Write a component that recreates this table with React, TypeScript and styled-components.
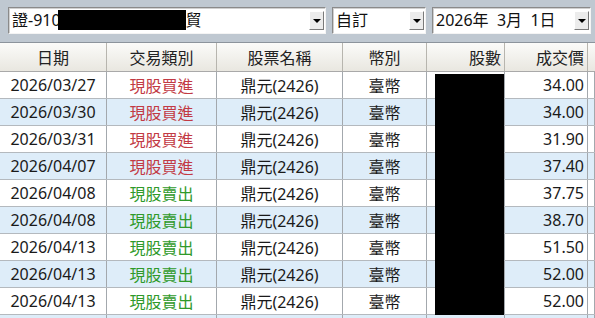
import React from "react";
import styled, { createGlobalStyle } from "styled-components";

const GlobalStyle = createGlobalStyle`
  html, body {
    margin: 0;
    padding: 0;
    background: #bfc8d1;
    overflow: hidden;
  }
`;

interface Trade {
  date: string;
  type: "buy" | "sell";
  name: string;
  currency: string;
  price: string;
}

const trades: Trade[] = [
  { date: "2026/03/27", type: "buy", name: "鼎元(2426)", currency: "臺幣", price: "34.00" },
  { date: "2026/03/30", type: "buy", name: "鼎元(2426)", currency: "臺幣", price: "34.00" },
  { date: "2026/03/31", type: "buy", name: "鼎元(2426)", currency: "臺幣", price: "31.90" },
  { date: "2026/04/07", type: "buy", name: "鼎元(2426)", currency: "臺幣", price: "37.40" },
  { date: "2026/04/08", type: "sell", name: "鼎元(2426)", currency: "臺幣", price: "37.75" },
  { date: "2026/04/08", type: "sell", name: "鼎元(2426)", currency: "臺幣", price: "38.70" },
  { date: "2026/04/13", type: "sell", name: "鼎元(2426)", currency: "臺幣", price: "51.50" },
  { date: "2026/04/13", type: "sell", name: "鼎元(2426)", currency: "臺幣", price: "52.00" },
  { date: "2026/04/13", type: "sell", name: "鼎元(2426)", currency: "臺幣", price: "52.00" },
  { date: "", type: "sell", name: "", currency: "", price: "" },
];

const COLS = "107px 110px 126px 84px 78px 83px 1fr";
const FONT = `"Noto Sans", "Noto Sans CJK TC", sans-serif`;

export default function App() {
  return (
    <Page>
      <GlobalStyle />
      <Toolbar>
        <Combo width={318}>
          <ComboText>證-910</ComboText>
          <Redact width={128} />
          <ComboText>貿</ComboText>
          <DropButton />
        </Combo>
        <Combo width={94}>
          <ComboText>自訂</ComboText>
          <DropButton />
        </Combo>
        <Combo width={159}>
          <ComboText>2026年&nbsp;&nbsp;3月&nbsp;&nbsp;1日</ComboText>
          <DropButton />
        </Combo>
      </Toolbar>
      <Grid>
        <HeaderRow>
          <HeadCell>日期</HeadCell>
          <HeadCell>交易類別</HeadCell>
          <HeadCell>股票名稱</HeadCell>
          <HeadCell>幣別</HeadCell>
          <HeadCell align="right">股數</HeadCell>
          <HeadCell align="right">成交價</HeadCell>
          <HeadCell />
        </HeaderRow>
        {trades.map((t, i) => (
          <Row key={i} striped={i % 2 === 1}>
            <Cell>{t.date}</Cell>
            <Cell tone={t.type}>{t.date ? (t.type === "buy" ? "現股買進" : "現股賣出") : ""}</Cell>
            <Cell>{t.name}</Cell>
            <Cell>{t.currency}</Cell>
            <Cell align="right" />
            <Cell align="right">{t.price}</Cell>
            <Cell />
          </Row>
        ))}
        <SharesRedaction />
      </Grid>
    </Page>
  );
}

const Page = styled.div`
  width: 595px;
  height: 318px;
  overflow: hidden;
  background: #bfc8d1;
  font-family: ${FONT};
`;

const Toolbar = styled.div`
  display: flex;
  align-items: center;
  gap: 6px;
  height: 43px;
  padding: 0 0 2px 8px;
  box-sizing: border-box;
  border-bottom: 1px solid #8c949c;
`;

const Combo = styled.div<{ width: number }>`
  position: relative;
  display: flex;
  align-items: center;
  width: ${(p) => p.width}px;
  height: 27px;
  box-sizing: border-box;
  background: #fff;
  border-top: 1px solid #8a8a8a;
  border-left: 1px solid #8a8a8a;
  border-right: 1px solid #f4f4f4;
  border-bottom: 1px solid #f4f4f4;
  box-shadow: inset 1px 1px 0 #d0d0d0;
  padding-left: 3px;
  font-size: 16px;
  color: #111;
`;

const ComboText = styled.span`
  white-space: nowrap;
  line-height: 1;
`;

const Redact = styled.span<{ width: number }>`
  display: inline-block;
  width: ${(p) => p.width}px;
  height: 20px;
  margin-left: -3px;
  background: #000;
`;

const DropButton = styled.span`
  position: absolute;
  right: 1px;
  top: 3px;
  width: 15px;
  height: 19px;
  box-sizing: border-box;
  background: #ececec;
  border: 1px solid;
  border-color: #fff #7a7a7a #7a7a7a #fff;
  &::after {
    content: "";
    position: absolute;
    left: 3px;
    top: 7px;
    border-left: 4px solid transparent;
    border-right: 4px solid transparent;
    border-top: 4px solid #000;
  }
`;

const Grid = styled.div`
  position: relative;
  background: #fff;
`;

const HeaderRow = styled.div`
  display: grid;
  grid-template-columns: ${COLS};
  height: 29px;
  background: linear-gradient(#fbfbf9, #e9e7e0);
  border-bottom: 1px solid #a9a9a9;
  box-sizing: border-box;
`;

const HeadCell = styled.div<{ align?: "right" }>`
  display: flex;
  align-items: center;
  justify-content: ${(p) => (p.align === "right" ? "flex-end" : "center")};
  padding-right: ${(p) => (p.align === "right" ? "3px" : "0")};
  border-right: 1px solid #b7b5ae;
  font-size: 16px;
  color: #222;
  &:last-child {
    border-right: none;
  }
`;

const Row = styled.div<{ striped: boolean }>`
  display: grid;
  grid-template-columns: ${COLS};
  height: 27px;
  box-sizing: border-box;
  background: ${(p) => (p.striped ? "#deedf9" : "#ffffff")};
  border-bottom: 1px solid #b4b9be;
`;

const Cell = styled.div<{ align?: "right"; tone?: "buy" | "sell" }>`
  display: flex;
  align-items: center;
  justify-content: ${(p) => (p.align === "right" ? "flex-end" : "center")};
  padding-right: ${(p) => (p.align === "right" ? "3px" : "0")};
  border-right: 1px solid #a3a8ad;
  font-size: 16px;
  color: ${(p) => (p.tone === "buy" ? "#c23a44" : p.tone === "sell" ? "#2f9a2a" : "#1a1a1a")};
  white-space: nowrap;
`;

const SharesRedaction = styled.div`
  position: absolute;
  left: 435px;
  top: 31px;
  width: 69px;
  height: 241px;
  background: #000;
`;
